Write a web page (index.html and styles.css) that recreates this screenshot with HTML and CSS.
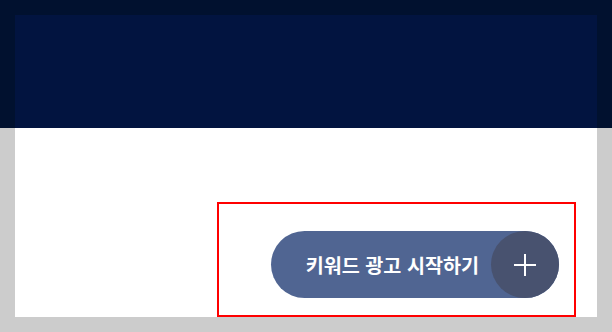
FILE: index.html
```html
<!DOCTYPE html>
<html lang="ko">
<head>
<meta charset="utf-8">
<link rel="stylesheet" href="styles.css">
</head>
<body>
<div class="panel">
  <div class="frame">
    <button class="cta">
      <span class="label">키워드 광고 시작하기</span>
      <span class="plus">
        <svg width="24" height="24" viewBox="0 0 24 24"><path d="M12 1v22M1 12h22" stroke="#fff" stroke-width="2" fill="none"/></svg>
      </span>
    </button>
  </div>
</div>
<div class="overlay"><div class="overlay-inner"></div></div>
</body>
</html>
```
FILE: styles.css
```css
html, body { margin: 0; }
body {
  background: #cccccc;
  padding: 15px;
  height: 332px;
  box-sizing: border-box;
  position: relative;
  font-family: "Noto Sans CJK KR", "Noto Sans", sans-serif;
}
.panel {
  background: #ffffff;
  width: 582px;
  height: 302px;
  display: flex;
  justify-content: flex-end;
  align-items: flex-end;
  padding-right: 21px;
  box-sizing: border-box;
}
.frame {
  width: 359px;
  height: 115px;
  border: 2px solid #ff0000;
  box-sizing: border-box;
  display: flex;
  justify-content: flex-end;
  align-items: flex-start;
  padding: 27px 15px 0 0;
}
.cta {
  display: flex;
  align-items: center;
  height: 67px;
  border: none;
  margin: 0;
  padding: 0 0 0 35px;
  background: #506592;
  border-radius: 34px;
  font-family: inherit;
  cursor: pointer;
}
.label {
  color: #ffffff;
  font-weight: 700;
  font-size: 19.6px;
  margin-right: 12px;
  white-space: nowrap;
}
.plus {
  width: 68px;
  height: 67px;
  border-radius: 50%;
  background: #48526f;
  display: flex;
  align-items: center;
  justify-content: center;
}
.plus svg { display: block; }
.overlay {
  position: absolute;
  left: 0;
  top: 0;
  width: 612px;
  height: 128px;
  background: #01112f;
}
.overlay-inner {
  position: absolute;
  left: 15px;
  top: 15px;
  width: 582px;
  height: 113px;
  background: #021440;
}
```
